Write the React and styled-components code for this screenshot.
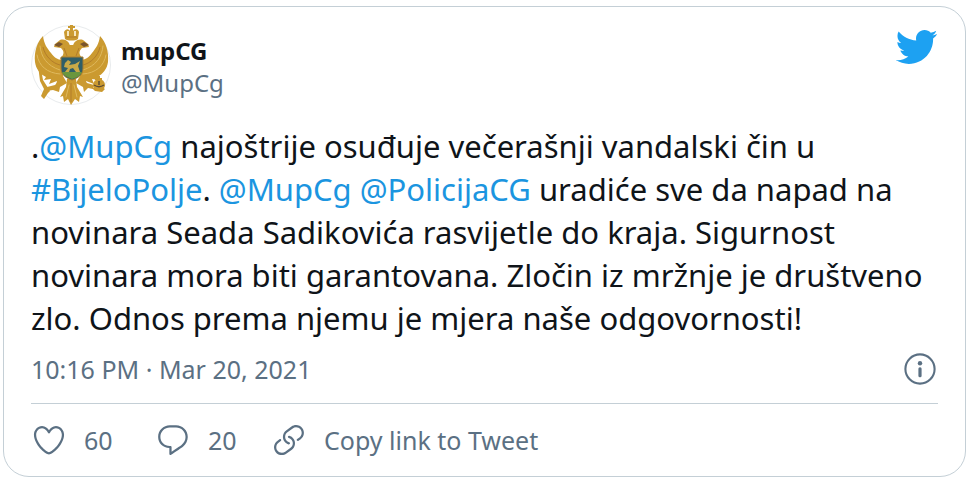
import React from "react";
import styled, { createGlobalStyle } from "styled-components";

const GlobalStyle = createGlobalStyle`
  * {
    box-sizing: border-box;
  }
  body {
    margin: 0;
    background: #fff;
    color: #0f1419;
    font-family: "Noto Sans", "Open Sans", sans-serif;
  }
`;

const Card = styled.article`
  margin: 6px 13px 4px 3px;
  padding: 18px 27px 17px;
  border: 1px solid #c4cfd6;
  border-radius: 26px;
`;

const Header = styled.header`
  display: flex;
  justify-content: space-between;
  align-items: flex-start;
`;

const Author = styled.a`
  display: flex;
  align-items: center;
  gap: 10px;
  color: inherit;
  text-decoration: none;
`;

const Names = styled.span`
  display: flex;
  flex-direction: column;
  padding-top: 4px;
  font-size: 24px;
  line-height: 32px;
`;

const Name = styled.span`
  font-weight: 700;
`;

const Handle = styled.span`
  color: #5b7083;
`;

const LogoLink = styled.a`
  display: flex;
  color: #1da1f2;
`;

const TweetText = styled.p`
  margin: 20px 0 8px;
  font-size: 31px;
  line-height: 43px;
`;

const TextLink = styled.a`
  color: #1b95e0;
  text-decoration: none;
`;

const Meta = styled.div`
  display: flex;
  justify-content: space-between;
  align-items: center;
  height: 41px;
  font-size: 25px;
`;

const MetaLink = styled.a`
  display: flex;
  color: #5b7083;
  text-decoration: none;
`;

const Actions = styled.footer`
  display: grid;
  grid-template-columns: 124px 116px auto;
  justify-content: start;
  margin-top: 14px;
  padding-top: 17px;
  border-top: 1px solid #c4cfd6;
`;

const Action = styled.button`
  display: flex;
  align-items: center;
  gap: 17px;
  padding: 0;
  border: 0;
  background: none;
  color: #5b7083;
  font: inherit;
  font-size: 25px;
  line-height: 38px;
  cursor: pointer;
`;

const Icon = styled.svg`
  display: block;
  flex: none;
  width: ${(props) => props.$size}px;
  height: ${(props) => props.$size}px;
  fill: currentColor;
`;

const Avatar = () => (
  <Icon $size={80} viewBox="0 0 80 80" aria-hidden="true">
    <circle cx="40" cy="40" r="39.5" fill="#fff" stroke="#e8ebed" />
    <g fill="#cb9a30">
      {/* wings */}
      <path d="M12 11C6 17 3 27 4 37C5 44 9 49 15 52L13 55L20 54L18 59L26 56L25 60L32 54V35C26 35 23 32 20 28C16 23 13 19 12 11Z" />
      <path d="M69 11C75 17 78 27 77 37C76 44 72 49 66 52L68 55L61 54L63 59L55 56L56 60L49 54V35C55 35 58 32 61 28C65 23 68 19 69 11Z" />
      {/* heads and necks */}
      <path d="M24 19L29 15C35 13 40 18 39 24L38 34H29C34 29 33 26 30 23L23 22Z" />
      <path d="M57 19L52 15C46 13 41 18 42 24L43 34H52C47 29 48 26 51 23L58 22Z" />
      <path d="M36 20H45V35H36Z" />
      {/* legs and tail */}
      <path d="M32 51L24 60L16 62L15 66L22 65L28 67L29 62L36 58ZM49 51L56 58L63 60L62 64L57 63L53 67L52 62L45 58Z" />
      <path d="M36 54L35 62L29 72L32 71L33 77L37 74L40 80L44 74L48 77L49 71L52 72L46 62L45 54Z" />
      {/* sceptre and orb */}
      <path d="M7 40L10 44L12 55L19 66L17 68L13 74L10 71L13 64L9 56Z" />
      <path d="M66 51H69V54H66ZM64 53H71V55H64ZM71 62L74 64L71 67L64 66L61 63Z" />
      <circle cx="68" cy="60" r="6" />
      {/* crown */}
      <path d="M34 14L33 7C35 3 38 4 39 6V3H37V1H39V0H42V1H44V3H42V6C43 4 47 3 48 7L47 14C44 16 37 16 34 14Z" />
    </g>
    <g fill="none" stroke="#dfb95d" strokeWidth="1" strokeLinecap="round">
      <path d="M9 21C10 32 16 41 29 45M6 30C8 41 16 48 29 49M72 21C71 32 65 41 52 45M75 30C73 41 65 48 52 49M35 72L38 60M46 72L43 60" />
    </g>
    <g fill="none" stroke="#b27c2b" strokeWidth="1">
      <path d="M12 22C14 31 21 38 29 40M69 22C67 31 60 38 52 40M40 58V77M33 23L36 31M48 23L45 31M35 12H46" />
    </g>
    <path d="M37 6V11M44 6V11" fill="none" stroke="#f6e6bd" strokeWidth="2" />
    <path d="M23 20L28 17L32 19L28 22ZM58 20L53 17L49 19L53 22Z" fill="#79552d" />
    <path d="M63 60C66 62 70 62 73 60M68 56V60" fill="none" stroke="#5c4c34" strokeWidth="1.5" />
    <path d="M30 32H52V43C52 50 47 53 41 55C35 53 30 50 30 43Z" fill="#2f5e68" stroke="#a77d2e" />
    <path d="M31 47H51C49 51 45 53 41 54C36 52 32 50 31 47Z" fill="#6a963d" />
    <path d="M34 38L37 35L40 37L38 40L44 39L49 36L47 41L49 47H45L42 43L39 44L38 47H34L37 43L33 42Z" fill="#c9a947" />
  </Icon>
);

const TwitterLogo = () => (
  <Icon $size={44} viewBox="0 0 24 24" aria-hidden="true">
    <path d="M23.643 4.937c-.835.37-1.732.62-2.675.733.962-.576 1.7-1.49 2.048-2.578-.9.534-1.897.922-2.958 1.13-.85-.904-2.06-1.47-3.4-1.47-2.572 0-4.658 2.086-4.658 4.66 0 .364.042.718.12 1.06-3.873-.195-7.304-2.05-9.602-4.868-.4.69-.63 1.49-.63 2.342 0 1.616.823 3.043 2.072 3.878-.764-.025-1.482-.234-2.11-.583v.06c0 2.257 1.605 4.14 3.737 4.568-.392.106-.803.162-1.227.162-.3 0-.593-.028-.877-.082.593 1.85 2.313 3.198 4.352 3.234-1.595 1.25-3.604 1.995-5.786 1.995-.376 0-.747-.022-1.112-.065 2.062 1.323 4.51 2.093 7.14 2.093 8.57 0 13.255-7.098 13.255-13.254 0-.2-.005-.402-.014-.602.91-.658 1.7-1.477 2.323-2.41z" />
  </Icon>
);

const InfoIcon = () => (
  <Icon $size={36} viewBox="0 0 36 36" aria-hidden="true">
    <circle cx="18" cy="18" r="14.6" fill="none" stroke="currentColor" strokeWidth="2.1" />
    <circle cx="18" cy="12.2" r="2.2" />
    <rect x="16.4" y="16.2" width="3.2" height="10" rx="1.5" />
  </Icon>
);

const HeartIcon = () => (
  <Icon $size={36} viewBox="0 0 24 24" aria-hidden="true">
    <path d="M12 21.638h-.014C9.403 21.59 1.95 14.856 1.95 8.478c0-3.064 2.525-5.754 5.403-5.754 2.29 0 3.83 1.58 4.646 2.73.814-1.148 2.354-2.73 4.645-2.73 2.88 0 5.404 2.69 5.404 5.755 0 6.376-7.454 13.11-10.037 13.157H12zM7.354 4.225c-2.08 0-3.903 1.988-3.903 4.255 0 5.74 7.034 11.596 8.55 11.658 1.518-.062 8.55-5.917 8.55-11.658 0-2.267-1.823-4.255-3.903-4.255-2.528 0-3.94 2.936-3.952 2.965-.23.562-1.156.562-1.387 0-.014-.03-1.425-2.965-3.954-2.965z" />
  </Icon>
);

const ReplyIcon = () => (
  <Icon $size={36} viewBox="0 0 24 24" aria-hidden="true">
    <path d="M14.046 2.242l-4.148-.01h-.002c-4.374 0-7.8 3.427-7.8 7.802 0 4.098 3.186 7.206 7.465 7.37v3.828c0 .108.044.286.12.403.142.225.384.347.632.347.138 0 .277-.038.402-.118.264-.168 6.473-4.14 8.088-5.506 1.902-1.61 3.04-3.97 3.043-6.312v-.017c-.006-4.367-3.43-7.787-7.8-7.788zm3.787 12.972c-1.134.96-4.862 3.405-6.772 4.643V16.67c0-.414-.335-.75-.75-.75h-.396c-3.66 0-6.318-2.476-6.318-5.886 0-3.534 2.768-6.302 6.3-6.302l4.147.01h.002c3.532 0 6.3 2.766 6.302 6.296-.003 1.91-.942 3.844-2.514 5.176z" />
  </Icon>
);

const LinkIcon = () => (
  <Icon $size={36} viewBox="0 0 24 24" aria-hidden="true">
    <path d="M11.96 14.945c-.067 0-.136-.01-.203-.027-1.13-.318-2.097-.986-2.795-1.932-.832-1.125-1.176-2.508-.968-3.893s.942-2.605 2.068-3.438l3.53-2.608c2.322-1.716 5.61-1.224 7.33 1.1.83 1.127 1.175 2.51.967 3.895s-.943 2.605-2.07 3.438l-1.48 1.094c-.333.246-.804.175-1.05-.158-.246-.334-.176-.804.158-1.05l1.48-1.095c.803-.592 1.327-1.463 1.476-2.45.148-.988-.098-1.975-.69-2.778-1.225-1.656-3.572-2.01-5.23-.784l-3.53 2.608c-.802.593-1.326 1.464-1.475 2.45-.15.99.097 1.975.69 2.778.498.675 1.187 1.15 1.992 1.377.4.114.633.528.52.928-.092.33-.394.547-.722.547z" />
    <path d="M7.27 22.054c-1.61 0-3.197-.735-4.225-2.125-.832-1.127-1.176-2.51-.968-3.894s.943-2.605 2.07-3.438l1.478-1.094c.334-.245.805-.175 1.05.158s.177.804-.157 1.05l-1.48 1.095c-.803.593-1.326 1.464-1.475 2.45-.148.99.097 1.975.69 2.778 1.225 1.657 3.57 2.01 5.23.785l3.528-2.608c1.658-1.225 2.01-3.57.785-5.23-.498-.674-1.187-1.15-1.992-1.376-.4-.113-.633-.527-.52-.927.112-.4.528-.63.926-.522 1.13.318 2.096.986 2.794 1.932 1.717 2.324 1.224 5.612-1.1 7.33l-3.53 2.608c-.933.693-2.023 1.026-3.105 1.026z" />
  </Icon>
);

const App = () => (
  <>
    <GlobalStyle />
    <Card>
      <Header>
        <Author href="#profile">
          <Avatar />
          <Names>
            <Name>mupCG</Name>
            <Handle>@MupCg</Handle>
          </Names>
        </Author>
        <LogoLink href="#twitter" aria-label="Twitter">
          <TwitterLogo />
        </LogoLink>
      </Header>
      <TweetText lang="sr-Latn">
        .<TextLink href="#mupcg">@MupCg</TextLink> najoštrije osuđuje večerašnji
        vandalski čin u <TextLink href="#bijelopolje">#BijeloPolje</TextLink>.{" "}
        <TextLink href="#mupcg">@MupCg</TextLink>{" "}
        <TextLink href="#policijacg">@PolicijaCG</TextLink> uradiće sve da napad
        na novinara Seada Sadikovića rasvijetle do kraja. Sigurnost novinara
        mora biti garantovana. Zločin iz mržnje je društveno zlo. Odnos prema
        njemu je mjera naše odgovornosti!
      </TweetText>
      <Meta>
        <MetaLink href="#status">10:16 PM · Mar 20, 2021</MetaLink>
        <MetaLink href="#info" aria-label="Twitter Ads info and privacy">
          <InfoIcon />
        </MetaLink>
      </Meta>
      <Actions>
        <Action type="button" aria-label="Like, 60">
          <HeartIcon />
          60
        </Action>
        <Action type="button" aria-label="Reply, 20">
          <ReplyIcon />
          20
        </Action>
        <Action type="button">
          <LinkIcon />
          Copy link to Tweet
        </Action>
      </Actions>
    </Card>
  </>
);

export default App;
